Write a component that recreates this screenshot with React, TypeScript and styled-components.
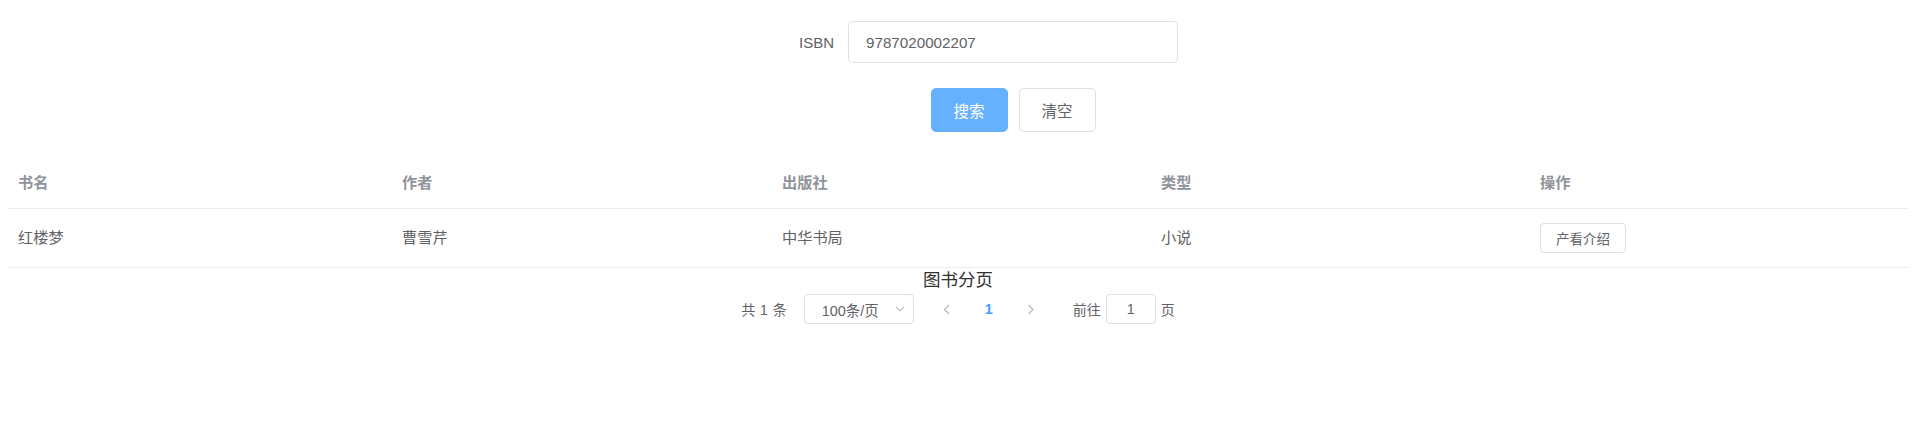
import React from "react";
import styled, { createGlobalStyle } from "styled-components";

const GlobalStyle = createGlobalStyle`
  html, body { margin: 0; padding: 0; background: #ffffff; }
  body {
    font-family: "Liberation Sans", "Noto Sans CJK SC", sans-serif;
    color: #606266;
  }
  * { box-sizing: border-box; }
`;

const Page = styled.div`
  width: 1918px;
  padding: 21px 9px 0 7px;
`;

const Form = styled.div`
  width: 438px;
  margin: 0 auto 0 733px;
  display: flex;
  flex-direction: column;
  gap: 25px;
`;

const FormItem = styled.div`
  display: flex;
  align-items: center;
`;

const Label = styled.label`
  width: 108px;
  padding-right: 14px;
  text-align: right;
  font-size: 15px;
  color: #606266;
`;

const TextInput = styled.input`
  width: 330px;
  height: 42px;
  border: 1px solid #dcdfe6;
  border-radius: 5px;
  padding: 0 17px;
  font-family: "Liberation Sans", "Noto Sans CJK SC", sans-serif;
  font-size: 15.2px;
  color: #606266;
  outline: none;
  background: #fff;
`;

const ButtonRow = styled.div`
  display: flex;
  justify-content: center;
  gap: 11px;
  padding-left: 108px;
`;

const Button = styled.button<{ $primary?: boolean }>`
  width: 77px;
  height: 44px;
  border-radius: 5px;
  border: 1px solid ${(p) => (p.$primary ? "#66b1ff" : "#dcdfe6")};
  background: ${(p) => (p.$primary ? "#66b1ff" : "#ffffff")};
  color: ${(p) => (p.$primary ? "#ffffff" : "#606266")};
  font-family: "Liberation Sans", "Noto Sans CJK SC", sans-serif;
  font-size: 15.5px;
  padding: 0;
  cursor: pointer;
`;

const Table = styled.div`
  margin-top: 26px;
  width: 1902px;
`;

const Row = styled.div<{ $head?: boolean }>`
  display: grid;
  grid-template-columns: 384px 380px 379px 379px 380px;
  height: ${(p) => (p.$head ? "51px" : "59px")};
  border-bottom: 1px solid #ebeef5;
  align-items: center;
`;

const Cell = styled.div<{ $head?: boolean }>`
  padding-left: 11px;
  padding-bottom: 4px;
  font-size: 15.2px;
  font-weight: ${(p) => (p.$head ? 700 : 400)};
  color: ${(p) => (p.$head ? "#909399" : "#606266")};
`;

const ActionCell = styled.div`
  padding-left: 11px;
  display: flex;
  align-items: center;
`;

const SmallButton = styled.button`
  width: 86px;
  height: 30px;
  border: 1px solid #dcdfe6;
  border-radius: 4px;
  background: #fff;
  color: #606266;
  font-family: "Liberation Sans", "Noto Sans CJK SC", sans-serif;
  font-size: 13.5px;
  padding: 0;
`;

const Title = styled.div`
  text-align: center;
  font-size: 17.5px;
  line-height: 25px;
  color: #303133;
  width: 1902px;
`;

const Pager = styled.div`
  width: 1902px;
  margin-top: 1px;
  display: flex;
  justify-content: center;
  align-items: center;
  height: 30px;
  font-size: 14px;
  color: #606266;
`;

const Total = styled.span`
  margin-right: 17px;
  word-spacing: 1px;
`;

const Select = styled.div`
  width: 110px;
  height: 30px;
  border: 1px solid #dcdfe6;
  border-radius: 4px;
  display: flex;
  align-items: center;
  justify-content: space-between;
  padding: 0 8px 0 17px;
  font-size: 14.4px;
  color: #606266;
`;

const PagerGap = styled.span`
  width: 12px;
`;

const NavButton = styled.span`
  width: 42px;
  height: 30px;
  display: flex;
  align-items: center;
  justify-content: center;
`;

const PageNum = styled.span`
  width: 42px;
  text-align: center;
  font-size: 14.4px;
  font-weight: 700;
  color: #409eff;
`;

const Jumper = styled.span`
  margin-left: 21px;
  display: flex;
  align-items: center;
  gap: 5px;
`;

const JumpInput = styled.div`
  width: 50px;
  height: 30px;
  border: 1px solid #dcdfe6;
  border-radius: 4px;
  display: flex;
  align-items: center;
  justify-content: center;
  font-size: 14.4px;
  color: #606266;
`;

const Chevron = ({ dir }: { dir: "left" | "right" | "down" }) => {
  if (dir === "down") {
    return (
      <svg width="10" height="6" viewBox="0 0 10 6">
        <path d="M1 1 L5 5 L9 1" fill="none" stroke="#c0c4cc" strokeWidth="1.1" />
      </svg>
    );
  }
  const d = dir === "left" ? "M6 1 L1.5 5.5 L6 10" : "M1.5 1 L6 5.5 L1.5 10";
  return (
    <svg width="8" height="11" viewBox="0 0 8 11">
      <path d={d} fill="none" stroke="#c0c4cc" strokeWidth="1.6" />
    </svg>
  );
};

const columns = ["书名", "作者", "出版社", "类型", "操作"];

export default function App() {
  return (
    <>
      <GlobalStyle />
      <Page>
        <Form>
          <FormItem>
            <Label>ISBN</Label>
            <TextInput defaultValue="9787020002207" />
          </FormItem>
          <ButtonRow>
            <Button $primary>搜索</Button>
            <Button>清空</Button>
          </ButtonRow>
        </Form>
        <Table>
          <Row $head>
            {columns.map((c) => (
              <Cell $head key={c}>
                {c}
              </Cell>
            ))}
          </Row>
          <Row>
            <Cell>红楼梦</Cell>
            <Cell>曹雪芹</Cell>
            <Cell>中华书局</Cell>
            <Cell>小说</Cell>
            <ActionCell>
              <SmallButton>产看介绍</SmallButton>
            </ActionCell>
          </Row>
        </Table>
        <Title>图书分页</Title>
        <Pager>
          <Total>共 1 条</Total>
          <Select>
            <span>100条/页</span>
            <Chevron dir="down" />
          </Select>
          <PagerGap />
          <NavButton>
            <Chevron dir="left" />
          </NavButton>
          <PageNum>1</PageNum>
          <NavButton>
            <Chevron dir="right" />
          </NavButton>
          <Jumper>
            前往
            <JumpInput>1</JumpInput>
            页
          </Jumper>
        </Pager>
      </Page>
    </>
  );
}
